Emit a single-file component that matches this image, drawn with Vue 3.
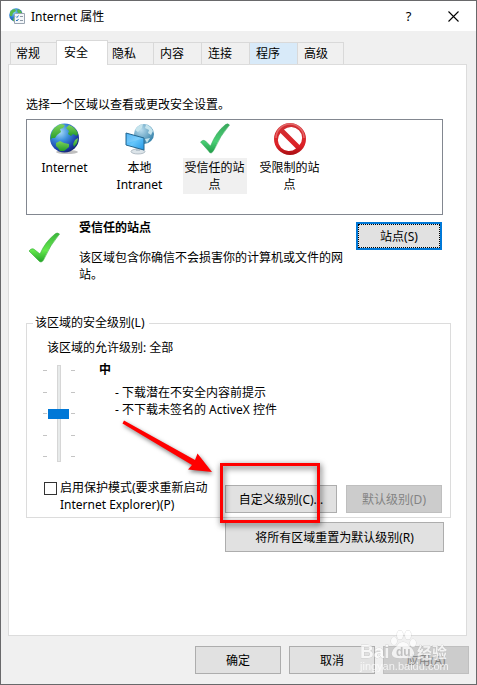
<script setup>
import { ref } from 'vue'

const tabs = ['常规', '安全', '隐私', '内容', '连接', '程序', '高级']
const activeTab = ref('安全')
const hoverTab = '程序'

const zones = [
  { id: 'internet', lines: ['Internet'] },
  { id: 'intranet', lines: ['本地', 'Intranet'] },
  { id: 'trusted', lines: ['受信任的站', '点'] },
  { id: 'restricted', lines: ['受限制的站', '点'] }
]
const activeZone = ref('trusted')

const level = ref(2)
const protectedMode = ref(false)
</script>

<template>
  <div class="dialog">
    <header class="title-bar">
      <svg class="title-icon" viewBox="0 0 16 16" aria-hidden="true">
        <defs>
          <radialGradient id="smallGlobe" cx="0.35" cy="0.3" r="0.8">
            <stop offset="0" stop-color="#8fd4f5" />
            <stop offset="0.5" stop-color="#2b7fce" />
            <stop offset="1" stop-color="#123f94" />
          </radialGradient>
        </defs>
        <circle cx="7" cy="7" r="6.8" fill="url(#smallGlobe)" />
        <path d="M1 4Q3 1 6 1L7 3L4 5L3 8L1 8ZM9 1Q12 2 13 5L10 6L8 3ZM4 10L7 11L7 13L4 13Z" fill="#57b947" />
        <path d="M6.5 5.5H15.5V15.5H5.5V6.5Z" fill="#f4f7fa" stroke="#9aa5b1" />
        <path d="M7 8.5L8 9.5L9.5 7.5M7 12L8 13L9.5 11" fill="none" stroke="#2f74b8" />
        <path d="M11 8.5H14M11 12.5H14" stroke="#8c98a5" />
      </svg>
      <h1 class="title">Internet 属性</h1>
      <button class="title-button" type="button" aria-label="帮助">?</button>
      <button class="title-button" type="button" aria-label="关闭">
        <svg class="close-icon" viewBox="0 0 11 11" aria-hidden="true">
          <path d="M0.5 0.5L10.5 10.5M10.5 0.5L0.5 10.5" stroke="#000" stroke-width="1.1" />
        </svg>
      </button>
    </header>

    <nav class="tabs" role="tablist">
      <button
        v-for="tab in tabs"
        :key="tab"
        type="button"
        role="tab"
        class="tab"
        :class="{ 'tab--active': tab === activeTab, 'tab--hover': tab === hoverTab }"
        :aria-selected="tab === activeTab"
        @click="activeTab = tab"
      >{{ tab }}</button>
    </nav>

    <main class="panel">
      <p class="caption">选择一个区域以查看或更改安全设置。</p>

      <div class="zones">
        <button
          v-for="zone in zones"
          :key="zone.id"
          type="button"
          class="zone"
          :class="{ 'zone--active': zone.id === activeZone }"
          @click="activeZone = zone.id"
        >
          <svg v-if="zone.id === 'internet'" class="zone-icon" viewBox="0 0 32 32" aria-hidden="true">
            <defs>
              <radialGradient id="globe" cx="0.35" cy="0.3" r="0.75">
                <stop offset="0" stop-color="#a9dcf8" />
                <stop offset="0.4" stop-color="#3b8edb" />
                <stop offset="0.8" stop-color="#1b3fa8" />
                <stop offset="1" stop-color="#14236f" />
              </radialGradient>
              <linearGradient id="land" x1="0" y1="0" x2="0" y2="1">
                <stop offset="0" stop-color="#7fd45a" />
                <stop offset="1" stop-color="#239a2b" />
              </linearGradient>
            </defs>
            <ellipse cx="18" cy="29" rx="11" ry="2" fill="#000" opacity="0.25" />
            <circle cx="15.5" cy="15" r="14.5" fill="url(#globe)" />
            <path d="M2 11Q5 3 12 1L16 2L14 5L11 6L12 9L8 12L6 15L3 15L1.500 17Z" fill="url(#land)" />
            <path d="M20 2Q26 4 29 10L28 13L24 11L22 13L19 11L20 8L17 5Z" fill="url(#land)" />
            <path d="M7 20L11 18L15 20L20 21L20 24L15 28L11 28L9 25L7 23Z" fill="url(#land)" />
            <path d="M26 17L29 15L28 20L25 24L24 21Z" fill="url(#land)" />
          </svg>

          <svg v-else-if="zone.id === 'intranet'" class="zone-icon" viewBox="0 0 32 32" aria-hidden="true">
            <defs>
              <radialGradient id="paleGlobe" cx="0.35" cy="0.3" r="0.8">
                <stop offset="0" stop-color="#b9dced" />
                <stop offset="1" stop-color="#2b7ba5" />
              </radialGradient>
              <linearGradient id="screen" x1="0" y1="0" x2="1" y2="1">
                <stop offset="0" stop-color="#39a8f2" />
                <stop offset="0.5" stop-color="#66c6fb" />
                <stop offset="1" stop-color="#2195e5" />
              </linearGradient>
            </defs>
            <circle cx="20" cy="11" r="10" fill="url(#paleGlobe)" />
            <path d="M11 7Q14 2 19 1L18 5L14 9ZM22 1.500Q27 3 29 8L27 12L24 10L25 7L21 5ZM21 16L26 15L23 20Z" fill="#c5e4ed" />
            <ellipse cx="14" cy="28.500" rx="7" ry="2.500" fill="#dce4e9" stroke="#8b9ba6" stroke-width="0.6" />
            <path d="M11 23L16 24L16 28L12 28Z" fill="#b8c5ce" />
            <path d="M2 10L20 15L20 27L2 22Z" fill="url(#screen)" stroke="#25668f" />
            <path d="M3 11L19 15.500L3 20Z" fill="#fff" opacity="0.15" />
          </svg>

          <svg v-else-if="zone.id === 'trusted'" class="zone-icon" viewBox="0 0 32 32" aria-hidden="true">
            <defs>
              <linearGradient id="tick" x1="0" y1="0" x2="0" y2="1">
                <stop offset="0" stop-color="#39a85c" />
                <stop offset="0.6" stop-color="#49cf75" />
                <stop offset="1" stop-color="#219a46" />
              </linearGradient>
            </defs>
            <path d="M1.500 19Q4 16 6.500 18L11.500 23Q17 9 26.500 1.500Q29 0 30.500 2Q21 13 15.500 26Q12 33 9.500 28Z" fill="url(#tick)" stroke="#35a75a" stroke-width="0.5" />
          </svg>

          <svg v-else class="zone-icon" viewBox="0 0 32 32" aria-hidden="true">
            <defs>
              <linearGradient id="ban" x1="0" y1="0" x2="0" y2="1">
                <stop offset="0" stop-color="#ce3034" />
                <stop offset="0.7" stop-color="#dd2227" />
                <stop offset="1" stop-color="#a80d12" />
              </linearGradient>
            </defs>
            <path d="M16 0A16 16 0 1 0 16 32A16 16 0 1 0 16 0ZM10 6.500A11 11 0 0 1 25.500 22ZM6.500 10L22 25.500A11 11 0 0 1 6.500 10Z" fill="url(#ban)" />
            <path d="M2 15A14 14 0 0 1 30 15" fill="none" stroke="#f08b8b" stroke-width="1.500" opacity="0.6" />
          </svg>

          <span class="zone-label">
            <span v-for="line in zone.lines" :key="line" class="zone-line">{{ line }}</span>
          </span>
        </button>
      </div>

      <section class="info">
        <svg class="info-icon" viewBox="0 0 32 32" aria-hidden="true">
          <defs>
            <linearGradient id="brightTick" x1="0" y1="0" x2="0" y2="1">
              <stop offset="0" stop-color="#3bb53c" />
              <stop offset="0.6" stop-color="#64e84c" />
              <stop offset="1" stop-color="#22a226" />
            </linearGradient>
          </defs>
          <path d="M1 19Q4 15 7 18L12 22Q17 10 27 2Q29 0 31.500 2Q22 13 15.500 28Q13 32 10 28Z" fill="url(#brightTick)" stroke="#36ad35" stroke-width="0.6" />
        </svg>
        <div class="info-text">
          <h2 class="info-title">受信任的站点</h2>
          <p class="info-desc">该区域包含你确信不会损害你的计算机或文件的网站。</p>
        </div>
        <button class="btn btn--focus" type="button">站点(S)</button>
      </section>

      <fieldset class="group">
        <legend class="legend">该区域的安全级别(L)</legend>
        <label class="allowed" for="level">该区域的允许级别: 全部</label>
        <div class="level">
          <div class="slider">
            <span class="ticks"><i v-for="n in 5" :key="n" class="tick"></i></span>
            <input id="level" v-model.number="level" class="range" type="range" min="0" max="4">
            <span class="ticks ticks--right"><i v-for="n in 5" :key="n" class="tick"></i></span>
          </div>
          <div class="level-text">
            <h3 class="level-name">中</h3>
            <p class="level-line">- 下载潜在不安全内容前提示</p>
            <p class="level-line">- 不下载未签名的 ActiveX 控件</p>
          </div>
        </div>
        <div class="actions">
          <label class="protect">
            <input v-model="protectedMode" class="checkbox" type="checkbox">
            <span>启用保护模式(要求重新启动<br>Internet Explorer)(P)</span>
          </label>
          <button class="btn btn--custom" type="button">自定义级别(C)...</button>
          <button class="btn btn--default" type="button" disabled>默认级别(D)</button>
        </div>

        <svg class="arrow" viewBox="0 0 100 64" aria-hidden="true">
          <path d="M5 1.500L3.500 4.500L73 46L69 50.500L93 53L78.500 34.500L76 41Z" fill="#f00" />
        </svg>
        <span class="marker"></span>
      </fieldset>

      <button class="btn btn--reset" type="button">将所有区域重置为默认级别(R)</button>
    </main>

    <footer class="footer">
      <button class="btn" type="button">确定</button>
      <button class="btn" type="button">取消</button>
      <button class="btn" type="button" disabled>应用(A)</button>
      <svg class="watermark" viewBox="0 0 92 48" aria-hidden="true">
        <g fill="#fff" stroke="#b4b4b4" stroke-width="0.6" paint-order="stroke">
          <text x="2" y="31" class="wm-latin">Bai</text>
          <ellipse cx="36" cy="14" rx="3" ry="4" />
          <ellipse cx="42" cy="8" rx="3" ry="4.500" />
          <ellipse cx="50" cy="8" rx="3" ry="4.500" />
          <ellipse cx="55" cy="16" rx="3" ry="4" />
          <path d="M45 15Q49 15 51 19Q57 23 56 28Q54 32 45 31Q36 32 34 28Q33 23 39 19Q41 15 45 15Z" />
          <text x="59" y="31" class="wm-cjk">经验</text>
          <text x="2" y="43" class="wm-url">jingyan.baidu.com</text>
        </g>
        <text x="38" y="29" class="wm-du">du</text>
      </svg>
    </footer>
  </div>
</template>

<style>
body {
  margin: 0;
}
</style>

<style scoped>
.dialog {
  box-sizing: border-box;
  display: flex;
  flex-direction: column;
  min-height: 100vh;
  border: 1px solid #69696b;
  background: #f0f0f0;
  color: #000;
  font-family: "Noto Sans", "Noto Sans CJK SC", sans-serif;
  font-size: 12px;
  line-height: 17px;
}

button,
input {
  box-sizing: border-box;
  margin: 0;
  font: inherit;
  color: inherit;
}

h1,
h2,
h3,
p {
  margin: 0;
  font-size: 12px;
}

.title-bar {
  display: flex;
  align-items: center;
  height: 30px;
  padding-left: 8px;
  background: #fff;
}

.title-icon {
  width: 16px;
  height: 16px;
  margin-right: 6px;
}

.title {
  flex: 1;
  font-weight: 400;
}

.title-button {
  display: flex;
  align-items: center;
  justify-content: center;
  width: 45px;
  height: 30px;
  padding: 0;
  border: 0;
  background: none;
  font-size: 13px;
}

.close-icon {
  width: 11px;
  height: 11px;
}

.tabs {
  display: flex;
  align-items: flex-end;
  height: 24px;
  padding: 9px 9px 0;
}

.tab {
  width: 48px;
  height: 22px;
  padding: 0 0 0 6px;
  border: 1px solid #d9d9d9;
  border-right-width: 0;
  border-bottom-width: 0;
  background: #f0f0f0;
  text-align: left;
}

.tab:first-child {
  width: 46px;
  padding-left: 5px;
}

.tab:last-child {
  width: 47px;
  border-right-width: 1px;
}

.tab--active {
  position: relative;
  z-index: 1;
  width: 52px;
  height: 25px;
  margin-bottom: -1px;
  padding: 0 0 2px 7px;
  border-right-width: 1px;
  background: #fff;
}

.tab--active + .tab {
  width: 45px;
  padding-left: 4px;
  border-left-width: 0;
}

.tab--hover {
  background: #d8eaf9;
}

.panel {
  flex: 1;
  display: flex;
  flex-direction: column;
  margin: 0 9px 0 7px;
  padding: 31px 15px 0 17px;
  border: 1px solid #dcdcdc;
  background: #fff;
}

.caption {
  line-height: 18px;
}

.zones {
  display: flex;
  box-sizing: border-box;
  height: 96px;
  margin: 5px 8px 0 0;
  border: 1px solid #828790;
}

.zone {
  display: flex;
  flex-direction: column;
  align-items: center;
  width: 75px;
  padding: 3px 0 0;
  border: 0;
  background: none;
}

.zone-icon {
  width: 32px;
  height: 32px;
}

.zone-label {
  width: 64px;
  margin-top: 3px;
  padding: 1px 0;
}

.zone--active .zone-label {
  background: #f0f0f0;
}

.zone-line {
  display: block;
}

.info {
  display: flex;
  align-items: flex-start;
  margin: 4px 9px 0 2px;
}

.info-icon {
  width: 32px;
  height: 32px;
  margin: 13px 19px 0 0;
}

.info-text {
  flex: 1;
}

.info-title {
  margin-bottom: 13px;
}

.info-desc {
  margin-right: 8px;
}

.btn {
  width: 86px;
  height: 28px;
  padding: 0;
  border: 1px solid #adadad;
  background: #e1e1e1;
  text-align: center;
}

.btn:disabled {
  border-color: #bfbfbf;
  background: #ccc;
  color: #838383;
}

.btn--focus {
  margin-top: 3px;
  border: 2px solid #0078d7;
  outline: 1px dotted #000;
  outline-offset: -3px;
}

.group {
  position: relative;
  min-width: 0;
  margin: 31px 0 0;
  padding: 7px 8px 4px 16px;
  border: 1px solid #dcdcdc;
}

.legend {
  margin-left: -10px;
  padding: 0 4px 0 2px;
  line-height: 18px;
}

.allowed {
  display: block;
  padding: 0 0 4px 4px;
  line-height: 18px;
}

.level {
  display: flex;
  gap: 23px;
}

.slider {
  display: flex;
  justify-content: space-between;
  width: 32px;
  height: 97px;
  margin: 4px 1px 0 0;
}

.ticks {
  display: flex;
  flex-direction: column;
  justify-content: space-between;
  padding: 5px 0;
}

.ticks--right {
  align-items: flex-start;
}

.tick {
  width: 4px;
  height: 1px;
  background: #c4c4c4;
}

.range {
  appearance: none;
  writing-mode: vertical-lr;
  width: 21px;
  height: 97px;
  background: none;
}

.range::-webkit-slider-runnable-track {
  width: 4px;
  height: 97px;
  box-sizing: border-box;
  border: 1px solid #d6d6d6;
  background: #e7eaea;
}

.range::-webkit-slider-thumb {
  appearance: none;
  box-sizing: border-box;
  width: 21px;
  height: 10px;
  margin-left: -10px;
  background: #0078d7;
}

.level-name {
  margin-bottom: 6px;
}

.level-line {
  padding-left: 16px;
}

.actions {
  display: flex;
  align-items: flex-end;
  gap: 9px;
  margin-top: 17px;
}

.protect {
  flex: 1;
  display: flex;
  align-items: flex-start;
  gap: 3px;
  padding-left: 1px;
  white-space: nowrap;
}

.checkbox {
  appearance: none;
  width: 13px;
  height: 13px;
  margin-top: 3px;
  border: 1px solid #333;
  background: #fff;
}

.checkbox:checked {
  background: #0078d7;
}

.btn--custom {
  width: 112px;
}

.btn--default {
  width: 96px;
}

.btn--reset {
  align-self: flex-end;
  width: 219px;
  height: 30px;
  margin: 4px 7px 0 0;
}

.arrow {
  position: absolute;
  top: 87px;
  right: 231px;
  width: 100px;
  height: 64px;
  filter: drop-shadow(1px 2px 2px rgba(0, 0, 0, 0.5));
  pointer-events: none;
}

.marker {
  position: absolute;
  right: 130px;
  bottom: -6px;
  box-sizing: border-box;
  width: 100px;
  height: 60px;
  border: 3px solid #f00;
  filter: drop-shadow(1px 2px 3px rgba(0, 0, 0, 0.7));
  pointer-events: none;
}

.footer {
  position: relative;
  display: flex;
  justify-content: flex-end;
  gap: 8px;
  padding: 10px 7px;
}

.watermark {
  position: absolute;
  right: 26px;
  bottom: 9px;
  width: 92px;
  height: 48px;
  opacity: 0.75;
  pointer-events: none;
}

.wm-latin {
  font-family: "Liberation Sans", sans-serif;
  font-size: 19px;
  font-weight: 700;
}

.wm-cjk {
  font-size: 15px;
  font-weight: 700;
}

.wm-url {
  font-family: "Liberation Sans", sans-serif;
  font-size: 11px;
  stroke: none;
}

.wm-du {
  font-family: "Liberation Sans", sans-serif;
  font-size: 12px;
  font-weight: 700;
  fill: #bdbdbd;
}
</style>
